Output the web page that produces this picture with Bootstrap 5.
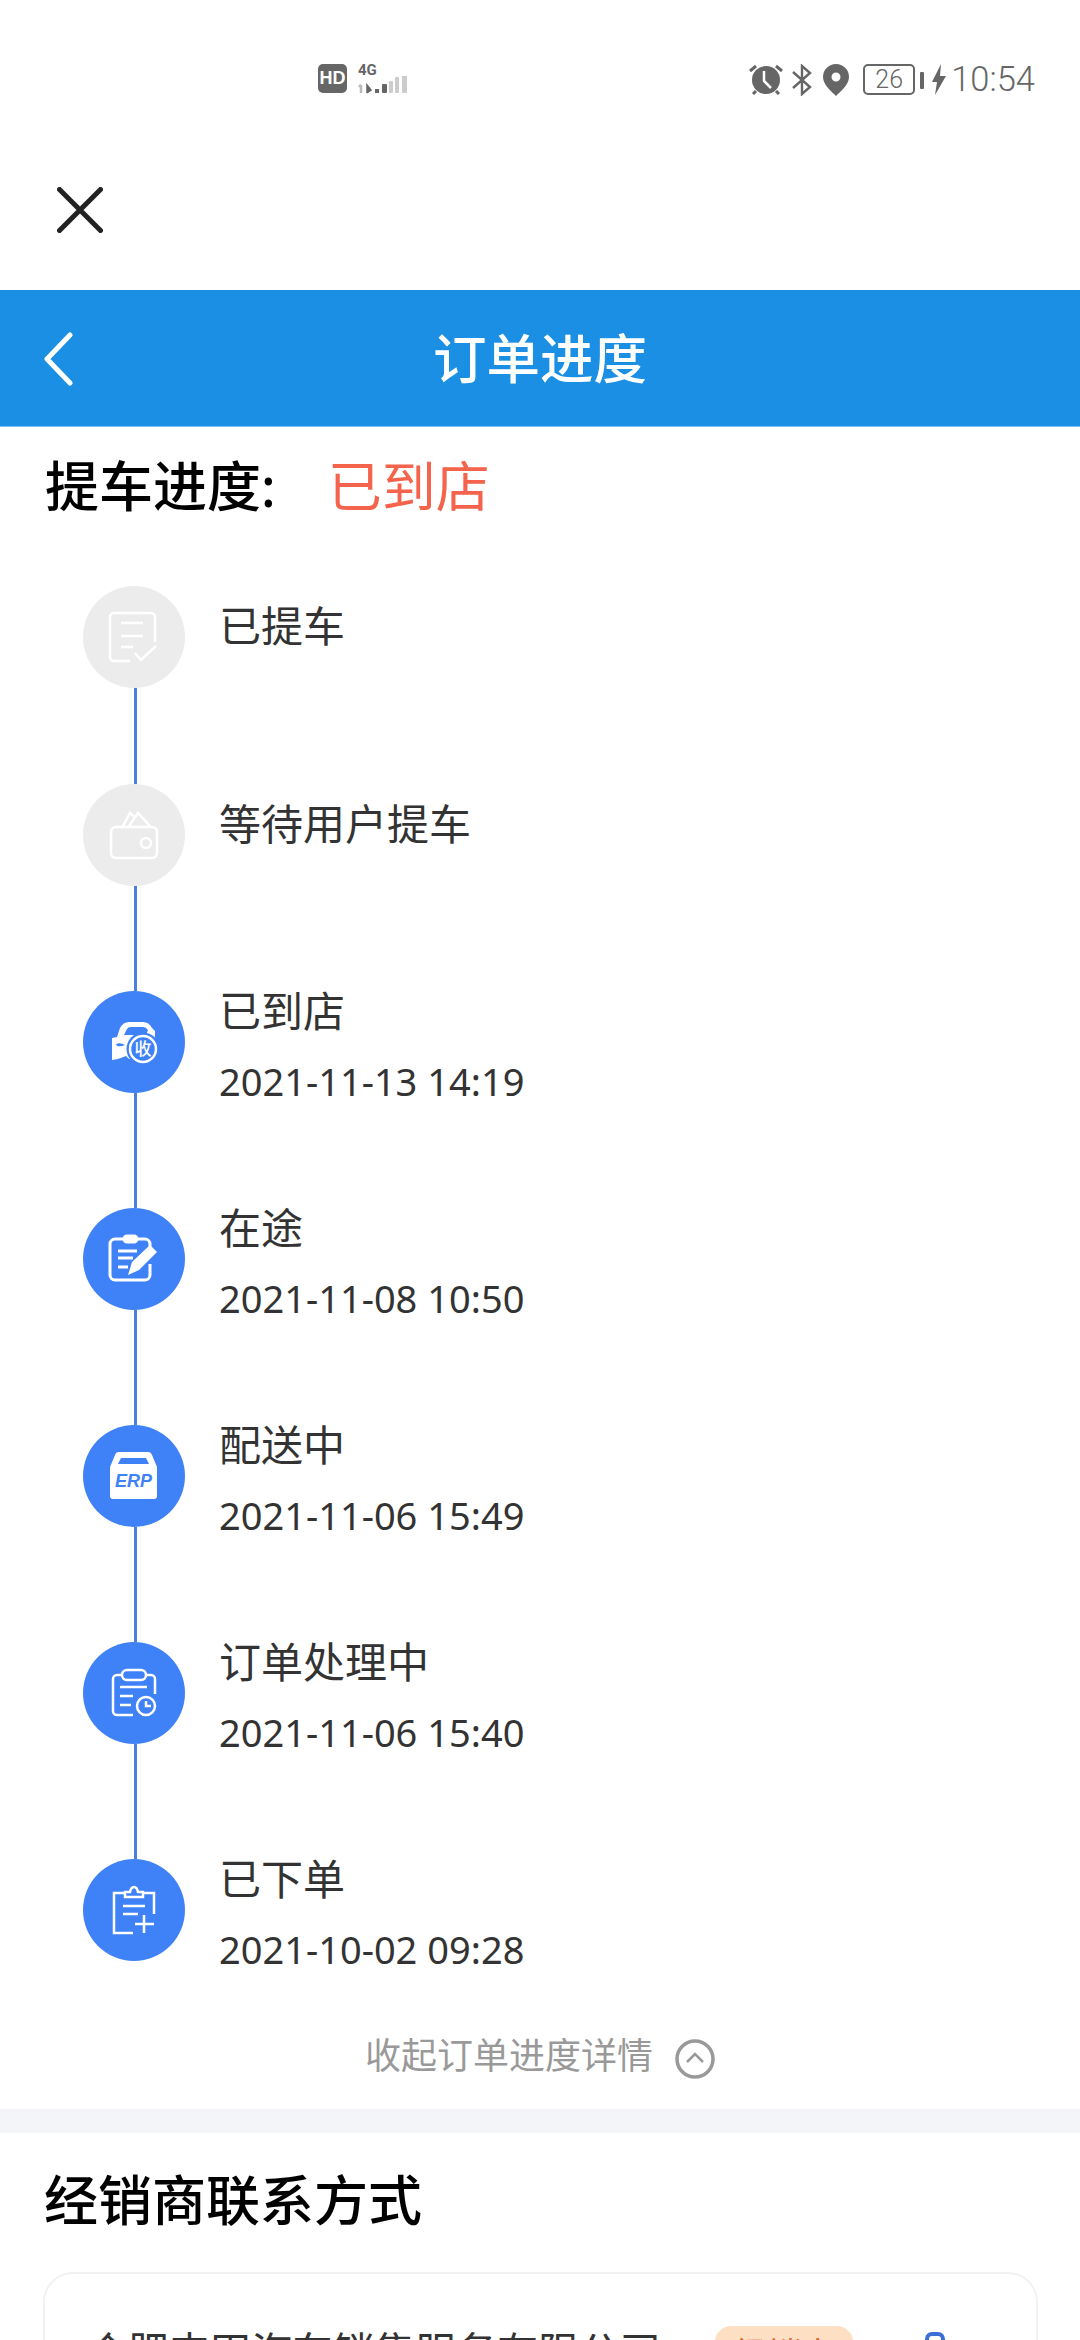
<!DOCTYPE html>
<html lang="zh-CN">
<head>
  <meta charset="UTF-8" />
  <meta name="viewport" content="width=device-width, initial-scale=1.0" />
  <title>订单进度</title>
  <link rel="stylesheet" href="https://cdn.jsdelivr.net/npm/bootstrap@5.3.3/dist/css/bootstrap.min.css">
  <style>
    body {
      background-color: #fff;
      font-family: "Noto Sans", "Noto Sans CJK SC", sans-serif;
      color: #333;
    }
    .page-clip { height: 2340px; overflow: hidden; }

    /* status bar */
    .status-row { height: 112px; padding: 64px 45px 0 318px; color: #666; }
    .hd-tag {
      width: 29px; height: 29px; border-radius: 5px; background-color: #666; color: #fff;
      font: 700 18px/29px "Liberation Sans", sans-serif; text-align: center;
    }
    .net-box { width: 52px; height: 31px; margin-left: 11px; }
    .net-label { font: 700 15px/12px "Roboto", sans-serif; color: #666; }
    .net-box svg { display: block; }
    .batt-box {
      width: 52px; height: 31px; border: 2px solid #666; border-radius: 5px;
      font: 300 25px/27px "Roboto", sans-serif; text-align: center; color: #666;
    }
    .batt-nub { width: 4px; height: 17px; background-color: #666; border-radius: 1px; margin-left: 5px; }
    .clock-text { font: 300 34.500px/31px "Roboto", sans-serif; color: #666; margin-left: 5px; }
    .alarm-ico { margin-right: 9px; }
    .blue-ico { margin-right: 11px; }
    .pin-ico { margin-right: 14px; }

    .close-wrap { height: 178px; padding: 75px 0 0 57px; }

    /* blue title bar */
    .title-bar {
      height: 137px; background-color: #1a8fe3; border-bottom: 1px solid #7cc4f3;
      display: grid; grid-template-columns: 1fr auto 1fr; align-items: center;
    }
    .back-arrow { margin-left: 43px; }
    .title-text { font-size: 53.500px; line-height: 137px; color: #fff; font-weight: 500; }

    /* progress header */
    .progress-head { height: 120px; padding-left: 45px; font-size: 54px; line-height: 118px; font-weight: 500; color: #000; }
    .progress-now { color: #f4634c; font-weight: 400; margin-left: 52px; }

    /* timeline */
    .tl-list { padding: 39px 0 0 83px; }
    .tl-step { display: flex; gap: 34px; }
    .tl-h198 { height: 198px; }
    .tl-h207 { height: 207px; }
    .tl-h217 { height: 217px; }
    .tl-h102 { height: 102px; }
    .tl-rail { display: flex; flex-direction: column; width: 102px; height: 100%; }
    .tl-dot { width: 102px; height: 102px; flex: none; border-radius: 50%; background-color: #3f82f7; }
    .tl-dot svg { display: block; }
    .tl-off { background-color: #ececec; }
    .tl-line { width: 3px; flex: 1; margin-left: 51px; background-color: #4a80e0; }
    .tl-name { font-size: 42px; line-height: 40px; color: #333; }
    .tl-name-solo { line-height: 80px; }
    .tl-date { font-size: 38px; line-height: 40px; margin-top: 30px; color: #333; }

    .fold-row { height: 106px; margin-top: 42px; color: #999; font-size: 36px; line-height: 106px; gap: 22px; }
    .fold-ico { margin-top: 5px; }

    .gray-band { height: 24px; background-color: #f4f5f9; }

    /* dealer */
    .dealer-title { height: 139px; padding-left: 44px; font-size: 54px; line-height: 134px; font-weight: 500; color: #000; }
    .dealer-box {
      margin: 0 42px 0 43px; height: 300px; padding: 52px 0 0 42px;
      border: 2px solid #f2f2f2; border-radius: 30px;
    }
    .dealer-name { flex: 0 0 628px; font-size: 41px; line-height: 50px; color: #333; }
    .dealer-tag {
      width: 138px; height: 70px; border-radius: 16px; background-color: #fde0c4; color: #e0662a;
      font-size: 34px; line-height: 56px; text-align: center;
    }
    .dealer-phone { margin: 6px 0 0 72px; }
  </style>
</head>
<body>
  <div class="page-clip">

    <div class="status-row d-flex justify-content-between align-items-start">
      <div class="d-flex align-items-start">
        <div class="hd-tag">HD</div>
        <div class="net-box">
          <div class="net-label">4G</div>
          <svg width="52" height="18" viewBox="0 0 52 18">
            <path d="M3 17V9M1 11l2-2" fill="none" stroke="#bbb" stroke-width="2.500"/>
            <path d="M9 17V9l4 5-4 3" fill="#666" stroke="#666" stroke-width="1.500"/>
            <rect x="17" y="13" width="4" height="4" fill="#666"/>
            <rect x="24" y="8" width="5" height="9" rx="1" fill="#666"/>
            <rect x="31" y="5" width="4" height="12" rx="1" fill="#ccc"/>
            <rect x="37" y="1" width="4" height="16" rx="1" fill="#ccc"/>
            <rect x="44" y="-4" width="5" height="21" rx="1" fill="#ccc"/>
          </svg>
        </div>
      </div>
      <div class="d-flex align-items-start">
        <svg width="34" height="31" viewBox="0 0 34 31" class="alarm-ico">
          <circle cx="17" cy="16" r="14" fill="#666"/>
          <path d="M15 7v10l7 7" fill="none" stroke="#fff" stroke-width="2.500"/>
          <path d="M1 7l6-5M33 7l-6-5M7 27l-3 3M27 27l3 3" stroke="#666" stroke-width="3"/>
        </svg>
        <svg width="20" height="32" viewBox="0 0 20 32" class="blue-ico">
          <path d="M1 8l17 15-8 7V2l8 7L1 24" fill="none" stroke="#666" stroke-width="2.400"/>
        </svg>
        <svg width="26" height="32" viewBox="0 0 26 32" class="pin-ico">
          <path fill-rule="evenodd" fill="#666" d="M13 0a13 13 0 0 1 13 13c0 8-9 15-13 19C9 28 0 21 0 13A13 13 0 0 1 13 0zm0 8.500a4.500 4.500 0 1 0 0 9 4.500 4.500 0 0 0 0-9z"/>
        </svg>
        <div class="batt-box">26</div>
        <div class="batt-nub mt-2"></div>
        <svg width="14" height="31" viewBox="0 0 14 31" class="ms-2">
          <path d="M9 0L0 18h5l-2 13 11-19H8z" fill="#666"/>
        </svg>
        <div class="clock-text">10:54</div>
      </div>
    </div>

    <div class="close-wrap">
      <svg width="46" height="46" viewBox="0 0 46 46">
        <path d="M2.500 2.500l41 41M43.500 2.500l-41 41" stroke="#222" stroke-width="5" stroke-linecap="round"/>
      </svg>
    </div>

    <nav class="title-bar">
      <svg width="30" height="54" viewBox="0 0 30 54" class="back-arrow">
        <path d="M27 3L4 27l23 24" fill="none" stroke="#fff" stroke-width="5" stroke-linecap="round" stroke-linejoin="round"/>
      </svg>
      <div class="title-text">订单进度</div>
    </nav>

    <div class="progress-head">提车进度:<span class="progress-now">已到店</span></div>

    <div class="tl-list">
      <div class="tl-step tl-h198">
        <div class="tl-rail">
          <div class="tl-dot tl-off">
            <svg width="102" height="102" viewBox="0 0 102 102" fill="none" stroke="#fff" stroke-width="2.500">
              <path d="M72 56V31a4 4 0 0 0-4-4H31a4 4 0 0 0-4 4v40a4 4 0 0 0 4 4h16"/>
              <path d="M38 37h22M38 50h22M38 61h12M52 67l6 7 15-14"/>
            </svg>
          </div>
          <div class="tl-line"></div>
        </div>
        <div class="tl-name tl-name-solo">已提车</div>
      </div>

      <div class="tl-step tl-h207">
        <div class="tl-rail">
          <div class="tl-dot tl-off">
            <svg width="102" height="102" viewBox="0 0 102 102" fill="none" stroke="#fff" stroke-width="2.500">
              <rect x="28" y="43" width="46" height="31" rx="5"/>
              <path d="M40 42l7-13 6 5M46 42l9-13 12 13"/>
              <circle cx="63" cy="59" r="5"/>
            </svg>
          </div>
          <div class="tl-line"></div>
        </div>
        <div class="tl-name tl-name-solo">等待用户提车</div>
      </div>

      <div class="tl-step tl-h217">
        <div class="tl-rail">
          <div class="tl-dot">
            <svg width="102" height="102" viewBox="0 0 102 102">
              <path fill="#fff" d="M29 47l5-1 3-9q3-6 9-6h14q6 0 9 6l3 3v28H46l-3-3-8 3-6 1z"/>
              <path fill="#3f82f7" d="M41 44l3-6q1-2 4-2h12q3 0 5 3l-2 5zM33 53q4-2 9 1-4 2-8 1z"/>
              <circle cx="60" cy="58" r="16.500" fill="#3f82f7"/>
              <circle cx="60" cy="58" r="13" fill="none" stroke="#fff" stroke-width="2.500"/>
              <text x="60" y="64" font-size="17" font-weight="500" text-anchor="middle" fill="#fff" font-family="Noto Sans CJK SC, sans-serif">收</text>
            </svg>
          </div>
          <div class="tl-line"></div>
        </div>
        <div>
          <div class="tl-name">已到店</div>
          <div class="tl-date">2021-11-13 14:19</div>
        </div>
      </div>

      <div class="tl-step tl-h217">
        <div class="tl-rail">
          <div class="tl-dot">
            <svg width="102" height="102" viewBox="0 0 102 102" fill="none" stroke="#fff" stroke-width="3">
              <path d="M54 31h8a5 5 0 0 1 5 5v9M67 56v11a5 5 0 0 1-5 5H32a5 5 0 0 1-5-5V36a5 5 0 0 1 5-5h9"/>
              <rect x="41" y="28" width="13" height="6" rx="3" fill="#fff"/>
              <path d="M35 43h19M35 50h15M35 59h10"/>
              <path d="M45 67l4-13 18-17 7 7-18 18z" fill="#fff" stroke="none"/>
            </svg>
          </div>
          <div class="tl-line"></div>
        </div>
        <div>
          <div class="tl-name">在途</div>
          <div class="tl-date">2021-11-08 10:50</div>
        </div>
      </div>

      <div class="tl-step tl-h217">
        <div class="tl-rail">
          <div class="tl-dot">
            <svg width="102" height="102" viewBox="0 0 102 102">
              <path fill="#fff" d="M36 27h29q3 0 4 3l5 12v29a3 3 0 0 1-3 3H30a3 3 0 0 1-3-3V42l5-12q1-3 4-3z"/>
              <path fill="#3f82f7" d="M38 33h25l3 6H35z"/>
              <text x="50.500" y="62" font-size="18" font-style="italic" font-weight="700" text-anchor="middle" fill="#3f82f7" font-family="Liberation Sans, sans-serif">ERP</text>
            </svg>
          </div>
          <div class="tl-line"></div>
        </div>
        <div>
          <div class="tl-name">配送中</div>
          <div class="tl-date">2021-11-06 15:49</div>
        </div>
      </div>

      <div class="tl-step tl-h217">
        <div class="tl-rail">
          <div class="tl-dot">
            <svg width="102" height="102" viewBox="0 0 102 102" fill="none" stroke="#fff" stroke-width="2.500">
              <path d="M39 33h-5a4 4 0 0 0-4 4v32a4 4 0 0 0 4 4h16M63 33h5a4 4 0 0 1 4 4v15"/>
              <rect x="39" y="28" width="24" height="10" rx="5"/>
              <path d="M37 45h27M37 54h13M37 63h11"/>
              <circle cx="63" cy="64" r="9"/>
              <path d="M63 59v5h5"/>
            </svg>
          </div>
          <div class="tl-line"></div>
        </div>
        <div>
          <div class="tl-name">订单处理中</div>
          <div class="tl-date">2021-11-06 15:40</div>
        </div>
      </div>

      <div class="tl-step tl-h102">
        <div class="tl-rail">
          <div class="tl-dot">
            <svg width="102" height="102" viewBox="0 0 102 102" fill="none" stroke="#fff" stroke-width="2.500">
              <path d="M42 34H31v40h19M60 34h11v21"/>
              <path d="M42 38v-5h5q1-5 4-5t4 5h5v5z"/>
              <path d="M40 47h22M40 55h15M52 65h19M61 56v18"/>
            </svg>
          </div>
        </div>
        <div>
          <div class="tl-name">已下单</div>
          <div class="tl-date">2021-10-02 09:28</div>
        </div>
      </div>
    </div>

    <div class="fold-row d-flex justify-content-center align-items-center">
      <span>收起订单进度详情</span>
      <svg width="40" height="40" viewBox="0 0 40 40" fill="none" stroke="#999" stroke-width="3.500" class="fold-ico">
        <circle cx="20" cy="20" r="18"/>
        <path d="M12 23l8-8 8 8" stroke-width="2.500"/>
      </svg>
    </div>

    <div class="gray-band"></div>

    <div class="dealer-title">经销商联系方式</div>

    <div class="dealer-box d-flex align-items-start">
      <div class="dealer-name">合肥丰田汽车销售服务有限公司</div>
      <div class="dealer-tag">经销商</div>
      <svg width="20" height="50" viewBox="0 0 20 50" class="dealer-phone">
        <rect x="2" y="2" width="16" height="46" rx="5" fill="none" stroke="#3b6fd8" stroke-width="4"/>
      </svg>
    </div>

  </div>
  <script src="https://cdn.jsdelivr.net/npm/bootstrap@5.3.3/dist/js/bootstrap.bundle.min.js"></script>
</body>
</html>
